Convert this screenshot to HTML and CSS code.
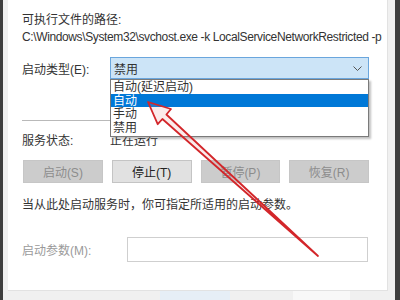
FILE: index.html
```html
<!DOCTYPE html>
<html lang="zh-CN">
<head>
    <meta charset="UTF-8">
    <title>服务属性</title>
    <link rel="stylesheet" href="styles.css">
</head>
<body>
    <div class="edge-dark"></div>
    <div class="window">
        <div class="panel">
            <div class="line">可执行文件的路径:</div>
            <div class="line path">C:\Windows\System32\svchost.exe -k LocalServiceNetworkRestricted -p</div>

            <div class="row type-row">
                <span class="label">启动类型(E):</span>
                <div class="select">
                    <span>禁用</span>
                    <svg class="chevron" width="9" height="5" viewBox="0 0 9 5">
                        <polyline points="0.5,0.5 4.5,4.5 8.5,0.5" fill="none" stroke="#555" stroke-width="1"/>
                    </svg>
                    <ul class="options">
                        <li>自动(延迟启动)</li>
                        <li class="active">自动</li>
                        <li>手动</li>
                        <li>禁用</li>
                    </ul>
                </div>
            </div>

            <div class="separator"></div>

            <div class="row status-row">
                <span class="label">服务状态:</span>
                <span>正在运行</span>
            </div>

            <div class="buttons">
                <button class="btn" disabled>启动(S)</button>
                <button class="btn">停止(T)</button>
                <button class="btn" disabled>暂停(P)</button>
                <button class="btn" disabled>恢复(R)</button>
            </div>

            <div class="line note">当从此处启动服务时，你可指定所适用的启动参数。</div>

            <div class="row param-row">
                <span class="label muted">启动参数(M):</span>
                <div class="input"></div>
            </div>
        </div>
        <div class="footer">
            <div class="ghost ghost-blue"></div>
            <div class="ghost ghost-white"></div>
        </div>
    </div>
    <div class="edge-gray"></div>
    <div class="edge-dark right"></div>

    <!-- red annotation arrow drawn over the dialog -->
    <svg class="arrow" width="400" height="300" viewBox="0 0 400 300">
        <polygon points="148,102 171,109 166.4,114.5 318,256 162.4,119 157.7,124.2"
                 fill="rgba(230,120,120,0.15)" stroke="#d3262a" stroke-width="1.8" stroke-linejoin="round"/>
    </svg>
</body>
</html>
```

FILE: styles.css
```css
body {
    margin: 0;
    width: 400px;
    height: 300px;
    display: flex;
    background-color: #f0f0f0;
    font-family: "Liberation Sans", "Noto Sans CJK SC", sans-serif;
    font-size: 12px;
    color: #333;
    overflow: hidden;
    position: relative;
}

.edge-dark {
    width: 3px;
    flex-shrink: 0;
    background-color: #3e3e3e;
}

.edge-dark.right {
    width: 5px;
}

.edge-gray {
    width: 7px;
    flex-shrink: 0;
}

.window {
    flex: 1;
    min-width: 0;
    padding-left: 5px;
    display: flex;
    flex-direction: column;
}

.panel {
    height: 291px;
    box-sizing: border-box;
    background-color: #fff;
    border-right: 1px solid #e2e2e2;
    border-bottom: 1px solid #e2e2e2;
    padding: 12px 18px 0 14px;
}

.line {
    line-height: 16px;
    white-space: nowrap;
}

.path {
    margin-top: 1px;
    letter-spacing: -0.38px;
}

.row {
    display: flex;
    align-items: center;
}

.label {
    width: 88px;
    flex-shrink: 0;
}

.muted {
    color: #9a9a9a;
}

.type-row {
    margin-top: 12px;
    height: 22px;
}

.select {
    flex: 1;
    height: 22px;
    box-sizing: border-box;
    background-color: #cce4f7;
    border: 1px solid #6aa6dd;
    padding: 0 3px;
    display: flex;
    align-items: center;
    justify-content: space-between;
    position: relative;
}

.chevron {
    margin-right: 3px;
}

.options {
    position: absolute;
    top: 21px;
    left: -1px;
    right: -1px;
    margin: 0;
    padding: 0 0 2px;
    list-style: none;
    background-color: #fff;
    border: 1px solid #7a7a7a;
    box-shadow: 2px 2px 2px rgba(0, 0, 0, 0.25);
    z-index: 2;
}

.options li {
    height: 13.5px;
    line-height: 14px;
    padding: 0 2px;
    overflow: hidden;
}

.options li.active {
    background-color: #0078d7;
    color: #fff;
}

.separator {
    margin-top: 41px;
    height: 1px;
    background-color: #b9b9b9;
}

.status-row {
    margin-top: 12px;
    line-height: 16px;
}

.buttons {
    margin-top: 11px;
    display: flex;
    gap: 9px;
    padding-left: 1px;
}

.btn {
    width: 80px;
    height: 23px;
    font: inherit;
    color: #222;
    background-color: #e1e1e1;
    border: 1px solid #c4c4c4;
    padding: 0;
}

.btn:disabled {
    background-color: #cccccc;
    border-color: #c6c6c6;
    color: #8c8c8c;
}

.note {
    margin-top: 14px;
}

.param-row {
    margin-top: 24px;
}

.param-row .label {
    width: 105px;
}

.input {
    flex: 1;
    height: 25px;
    box-sizing: border-box;
    border: 1px solid #cfcfcf;
    background-color: #fff;
    margin-right: 1px;
}

.footer {
    flex: 1;
    display: flex;
}

.ghost {
    height: 9px;
}

.ghost-blue {
    width: 70px;
    margin-left: 152px;
    background-color: #e6eef6;
}

.ghost-white {
    width: 57px;
    margin-left: 63px;
    background-color: #f8f8f8;
}

.arrow {
    position: absolute;
    left: 0;
    top: 0;
    z-index: 5;
}
```
